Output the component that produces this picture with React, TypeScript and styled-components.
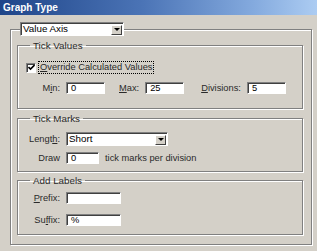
import React from "react";
import styled, { createGlobalStyle } from "styled-components";

const GlobalStyle = createGlobalStyle`
  html, body {
    margin: 0;
    padding: 0;
    background: #d4d0c8;
  }
`;

const Window = styled.div`
  width: 317px;
  height: 251px;
  background: #d4d0c8;
  font-family: "Liberation Sans", Arial, sans-serif;
  font-size: 9.3px;
  color: #2a2a2a;
  overflow: hidden;
  display: flex;
  flex-direction: column;
`;

const TitleBar = styled.div`
  height: 15px;
  flex: none;
  display: flex;
  align-items: center;
  padding-left: 3px;
  background: linear-gradient(90deg, #1f4589 0%, #4b74b6 45%, #84aade 80%, #acccf2 100%);
  color: #fff;
  font-weight: bold;
  font-size: 10px;
`;

const Body = styled.div`
  padding: 7px 0 0 10px;
`;

const Group = styled.fieldset`
  margin: 0;
  width: 302px;
  box-sizing: border-box;
  padding: 0 8px 9px 6px;
  border: 1px solid #808080;
  box-shadow: 1px 1px 0 #fff, inset 1px 1px 0 #fff;
  min-width: 0;
`;

const SelectLegend = styled.legend`
  padding: 0;
  margin-left: 3px;
  line-height: 0;
`;

const InnerGroup = styled.fieldset<{ $top: number; $pt: number; $pb: number }>`
  margin: ${(p) => p.$top}px 0 0 0;
  padding: ${(p) => p.$pt}px 8px ${(p) => p.$pb}px 8px;
  border: 1px solid #808080;
  box-shadow: 1px 1px 0 #fff, inset 1px 1px 0 #fff;
  min-width: 0;
`;

const GroupTitle = styled.legend`
  padding: 0 3px;
  margin-left: 4px;
  font-size: 9.8px;
  line-height: 11px;
`;

const Select = styled.div<{ $w: number }>`
  width: ${(p) => p.$w}px;
  height: 14px;
  box-sizing: border-box;
  background: #fff;
  border: 1px solid;
  border-color: #808080 #fff #fff #808080;
  box-shadow: inset 1px 1px 0 #404040;
  display: flex;
  align-items: center;
  padding: 0 1px 0 2px;
  font-size: 9.8px;
  line-height: 12px;
  color: #000;
`;

const SelectText = styled.span`
  flex: 1;
`;

const ArrowButton = styled.span`
  width: 11px;
  height: 10px;
  box-sizing: border-box;
  background: #d4d0c8;
  border: 1px solid;
  border-color: #fff #404040 #404040 #fff;
  display: flex;
  align-items: center;
  justify-content: center;
  margin-top: 1px;
`;

const Arrow = styled.span`
  width: 0;
  height: 0;
  border-left: 3px solid transparent;
  border-right: 3px solid transparent;
  border-top: 3px solid #000;
`;

const CheckRow = styled.div`
  display: flex;
  align-items: center;
  height: 13px;
`;

const CheckBox = styled.span`
  width: 10px;
  height: 10px;
  box-sizing: border-box;
  background: #fff;
  border: 1px solid;
  border-color: #808080 #fff #fff #808080;
  box-shadow: inset 1px 1px 0 #404040;
  display: flex;
  align-items: center;
  justify-content: center;
`;

const CheckLabel = styled.span`
  margin-left: 3px;
  padding: 0 1px;
  outline: 1px dotted #000;
  line-height: 11px;
`;

const Row = styled.div<{ $top: number }>`
  display: flex;
  align-items: center;
  margin-top: ${(p) => p.$top}px;
`;

const Label = styled.span<{ $w?: number; $ml?: number }>`
  width: ${(p) => (p.$w ? `${p.$w}px` : "auto")};
  margin-left: ${(p) => p.$ml ?? 0}px;
  text-align: right;
  margin-right: 6px;
  flex: none;
`;

const Input = styled.div<{ $w: number }>`
  width: ${(p) => p.$w}px;
  height: 12px;
  box-sizing: border-box;
  background: #fff;
  border: 1px solid;
  border-color: #808080 #fff #fff #808080;
  box-shadow: inset 1px 1px 0 #404040;
  padding-left: 4px;
  line-height: 10px;
  color: #000;
  flex: none;
`;

const Trailing = styled.span`
  margin-left: 6px;
`;

const Key = styled.u``;

export default function App() {
  return (
    <>
      <GlobalStyle />
      <Window>
        <TitleBar>Graph Type</TitleBar>
        <Body>
          <Group>
            <SelectLegend>
              <Select $w={104}>
                <SelectText>Value Axis</SelectText>
                <ArrowButton>
                  <Arrow />
                </ArrowButton>
              </Select>
            </SelectLegend>

            <InnerGroup $top={4} $pt={10} $pb={14}>
              <GroupTitle>Tick Values</GroupTitle>
              <CheckRow>
                <CheckBox>
                  <svg width="7" height="7" viewBox="0 0 7 7">
                    <path d="M0.5 3 L2.5 5 L6.5 1" stroke="#000" strokeWidth="1.6" fill="none" />
                  </svg>
                </CheckBox>
                <CheckLabel>
                  <Key>O</Key>verride Calculated Values
                </CheckLabel>
              </CheckRow>
              <Row $top={8}>
                <Label $w={34}>
                  M<Key>i</Key>n:
                </Label>
                <Input $w={39}>0</Input>
                <Label $ml={14}>
                  <Key>M</Key>ax:
                </Label>
                <Input $w={39}>25</Input>
                <Label $ml={17}>
                  <Key>D</Key>ivisions:
                </Label>
                <Input $w={39}>5</Input>
              </Row>
            </InnerGroup>

            <InnerGroup $top={4} $pt={8} $pb={7}>
              <GroupTitle>Tick Marks</GroupTitle>
              <Row $top={0}>
                <Label $w={34}>
                  Lengt<Key>h</Key>:
                </Label>
                <Select $w={102}>
                  <SelectText>Short</SelectText>
                  <ArrowButton>
                    <Arrow />
                  </ArrowButton>
                </Select>
              </Row>
              <Row $top={6}>
                <Label $w={34}>Draw</Label>
                <Input $w={33}>0</Input>
                <Trailing>tick marks per division</Trailing>
              </Row>
            </InnerGroup>

            <InnerGroup $top={3} $pt={6} $pb={8}>
              <GroupTitle>Add Labels</GroupTitle>
              <Row $top={0}>
                <Label $w={34}>
                  <Key>P</Key>refix:
                </Label>
                <Input $w={55} />
              </Row>
              <Row $top={10}>
                <Label $w={34}>
                  Su<Key>f</Key>fix:
                </Label>
                <Input $w={55}>%</Input>
              </Row>
            </InnerGroup>
          </Group>
        </Body>
      </Window>
    </>
  );
}
